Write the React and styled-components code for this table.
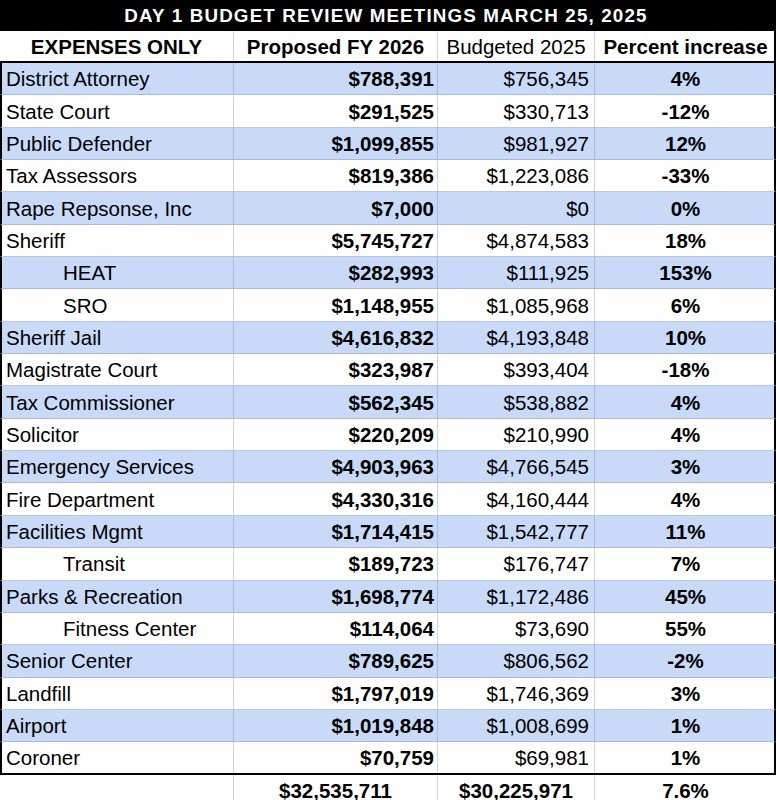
import React from 'react'
import styled, { createGlobalStyle } from 'styled-components'

const GlobalStyle = createGlobalStyle`
  html, body {
    margin: 0;
    padding: 0;
    background: #ffffff;
    overflow: hidden;
  }
  body {
    font-family: "Liberation Sans", Arial, sans-serif;
    color: #000;
  }
`

const Sheet = styled.div`
  width: 776px;
  height: 800px;
  overflow: hidden;
  font-size: 20.5px;
`

const TitleBar = styled.div`
  height: 31px;
  background: #000;
  color: #fff;
  font-weight: bold;
font-size: 18.8px;
  letter-spacing: 1.15px;
  display: flex;
  align-items: center;
  justify-content: center;
  padding-right: 4px;
  box-sizing: border-box;
`

// the black edge border eats into the first column so the grid lines stay aligned
const Row = styled.div`
  display: grid;
  grid-template-columns: ${(p) => (p.$edge ? '232px' : '234px')} 204px 157px 181px;
  box-sizing: border-box;
  height: ${(p) => p.$h || '32.35px'};
  background: ${(p) => (p.$blue ? '#c9daf8' : '#ffffff')};
  border-bottom: ${(p) => p.$bottom || `1px solid ${p.$blue ? '#a9bbd9' : '#b9c6dc'}`};
  border-left: ${(p) => (p.$edge ? '2px solid #000' : 'none')};
  border-right: ${(p) => (p.$edge || p.$rightEdge ? '2px solid #000' : 'none')};
`

const Cell = styled.div`
  display: flex;
  align-items: center;
  justify-content: ${(p) => p.$align || 'flex-start'};
  box-sizing: border-box;
  padding: 1px ${(p) => p.$pr ?? 4}px 0 ${(p) => p.$pl ?? 4}px;
  font-weight: ${(p) => (p.$bold ? 'bold' : 'normal')};
  white-space: nowrap;
  overflow: hidden;
  border-right: ${(p) => (p.$last ? 'none' : `1px solid ${p.$line || '#d3d3d3'}`)};
`

const rows = [
  ['District Attorney', '$788,391', '$756,345', '4%'],
  ['State Court', '$291,525', '$330,713', '-12%'],
  ['Public Defender', '$1,099,855', '$981,927', '12%'],
  ['Tax Assessors', '$819,386', '$1,223,086', '-33%'],
  ['Rape Repsonse, Inc', '$7,000', '$0', '0%'],
  ['Sheriff', '$5,745,727', '$4,874,583', '18%'],
  ['HEAT', '$282,993', '$111,925', '153%', true],
  ['SRO', '$1,148,955', '$1,085,968', '6%', true],
  ['Sheriff Jail', '$4,616,832', '$4,193,848', '10%'],
  ['Magistrate Court', '$323,987', '$393,404', '-18%'],
  ['Tax Commissioner', '$562,345', '$538,882', '4%'],
  ['Solicitor', '$220,209', '$210,990', '4%'],
  ['Emergency Services', '$4,903,963', '$4,766,545', '3%'],
  ['Fire Department', '$4,330,316', '$4,160,444', '4%'],
  ['Facilities Mgmt', '$1,714,415', '$1,542,777', '11%'],
  ['Transit', '$189,723', '$176,747', '7%', true],
  ['Parks & Recreation', '$1,698,774', '$1,172,486', '45%'],
  ['Fitness Center', '$114,064', '$73,690', '55%', true],
  ['Senior Center', '$789,625', '$806,562', '-2%'],
  ['Landfill', '$1,797,019', '$1,746,369', '3%'],
  ['Airport', '$1,019,848', '$1,008,699', '1%'],
  ['Coroner', '$70,759', '$69,981', '1%'],
]

export default function App() {
  return (
    <Sheet>
      <GlobalStyle />
      <TitleBar>DAY 1 BUDGET REVIEW MEETINGS MARCH 25, 2025</TitleBar>

      <Row $h="32px" $bottom="2px solid #000" $rightEdge>
        <Cell $align="center" $bold>EXPENSES ONLY</Cell>
        <Cell $align="center" $bold>Proposed FY 2026</Cell>
        <Cell $align="center">Budgeted 2025</Cell>
        <Cell $align="center" $bold $last>Percent increase</Cell>
      </Row>

      {rows.map(([name, proposed, budgeted, pct, indent], i) => {
        const blue = i % 2 === 0
        const line = blue ? '#a9bbd9' : '#d3d3d3'
        const lastRow = i === rows.length - 1
        return (
          <Row
            key={name}
            $blue={blue}
            $edge
            $bottom={lastRow ? '2px solid #000' : undefined}
            $h={lastRow ? '33px' : undefined}
          >
            <Cell $pl={indent ? 61 : 4} $line={line}>{name}</Cell>
            <Cell $align="flex-end" $pr={3} $bold $line={line}>{proposed}</Cell>
            <Cell $align="flex-end" $pr={5} $line={line}>{budgeted}</Cell>
            <Cell $align="center" $bold $last>{pct}</Cell>
          </Row>
        )
      })}

      <Row $h="32px" $bottom="1px solid #d3d3d3">
        <Cell />
        <Cell $align="center" $bold>$32,535,711</Cell>
        <Cell $align="center" $bold>$30,225,971</Cell>
        <Cell $align="center" $bold $last>7.6%</Cell>
      </Row>
    </Sheet>
  )
}
